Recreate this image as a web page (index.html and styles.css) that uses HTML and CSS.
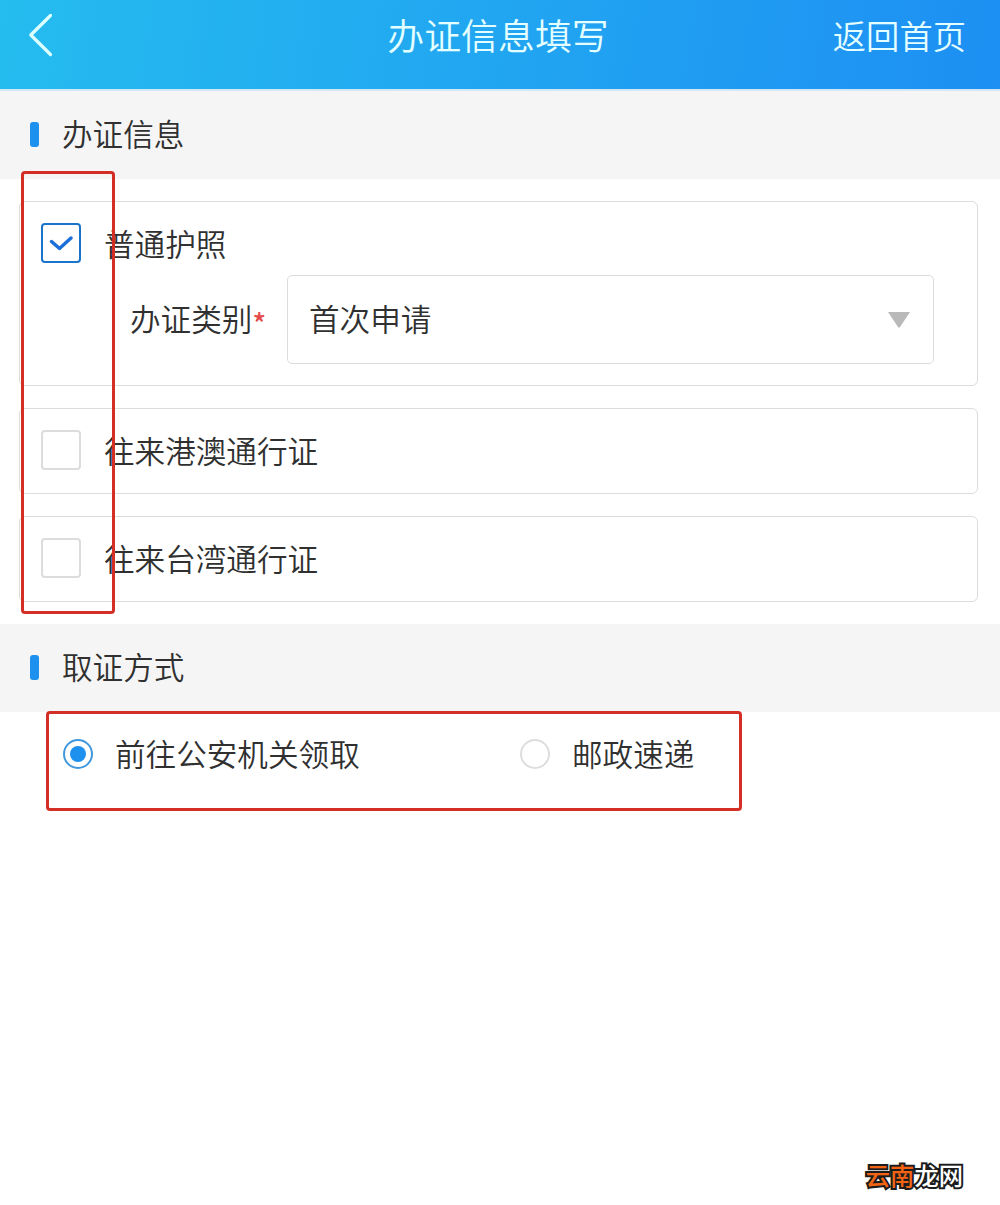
FILE: index.html
```html
<!DOCTYPE html>
<html lang="zh-CN">
<head>
    <meta charset="UTF-8">
    <meta name="viewport" content="width=device-width, initial-scale=1.0">
    <title>办证信息填写</title>
    <link rel="stylesheet" href="styles.css">
</head>
<body>
    <header class="header">
        <a class="back">
            <svg width="26" height="44" viewBox="0 0 26 44">
                <path d="M22.5 2.5 L2.8 22 L22.5 41.5" fill="none" stroke="#dcffff" stroke-width="3.2" stroke-linecap="round" stroke-linejoin="round"/>
            </svg>
        </a>
        <h1>办证信息填写</h1>
        <a class="home">返回首页</a>
    </header>

    <!-- 办证信息 -->
    <h2 class="section-title"><span>办证信息</span></h2>
    <div class="cards">
        <div class="card">
            <label class="check-row">
                <span class="checkbox checked">
                    <svg width="24" height="18" viewBox="0 0 24 18">
                        <path d="M2.5 7.5 L10.5 14.5 L22 4" fill="none" stroke="#1b6fd8" stroke-width="3.4" stroke-linecap="round" stroke-linejoin="round"/>
                    </svg>
                </span>
                <span>普通护照</span>
            </label>
            <div class="type-row">
                <span class="type-label">办证类别<i class="required">*</i></span>
                <div class="select">
                    <span>首次申请</span>
                    <svg width="22" height="16" viewBox="0 0 22 16"><path d="M0 0 H22 L12 15 Q11 16 10 15 Z" fill="#b9b9b9"/></svg>
                </div>
            </div>
        </div>
        <div class="card">
            <label class="check-row">
                <span class="checkbox"></span>
                <span>往来港澳通行证</span>
            </label>
        </div>
        <div class="card">
            <label class="check-row">
                <span class="checkbox"></span>
                <span>往来台湾通行证</span>
            </label>
        </div>
        <div class="mark mark-checks"></div>
    </div>

    <!-- 取证方式 -->
    <h2 class="section-title"><span>取证方式</span></h2>
    <div class="radios">
        <label class="radio-item">
            <span class="radio selected"></span>
            <span class="radio-text">前往公安机关领取</span>
        </label>
        <label class="radio-item">
            <span class="radio"></span>
            <span class="radio-text">邮政速递</span>
        </label>
        <div class="mark mark-radios"></div>
    </div>

    <div class="watermark"><span>云南</span>龙网</div>
</body>
</html>
```

FILE: styles.css
```css
* {
    box-sizing: border-box;
}

body {
    margin: 0;
    height: 1205px;
    position: relative;
    background-color: #ffffff;
    color: #303030;
    font-family: "Noto Sans CJK SC", sans-serif;
    font-size: 30.6px;
    font-weight: 350;
    line-height: 42px;
    overflow: hidden;
}

.header {
    display: grid;
    grid-template-columns: 1fr auto 1fr;
    height: 91px;
    padding: 0 34px 0 28px;
    border-bottom: 2px solid #d3e8f6;
    background: linear-gradient(100deg, #25bcef, #1d8ff3);
    background-clip: padding-box;
    color: #e4ffff;
}

.back {
    padding-top: 13px;
    line-height: 0;
}

h1 {
    margin: 0;
    padding: 7px 0 0 2px;
    font-size: 36.9px;
    font-weight: 350;
    line-height: 54px;
}

.home {
    padding-top: 11px;
    font-size: 33.3px;
    line-height: 48px;
    text-align: right;
}

.section-title {
    display: flex;
    align-items: center;
    height: 88px;
    margin: 0;
    padding: 0 0 1px 30px;
    background-color: #f5f5f5;
    font-size: 30.6px;
    font-weight: 350;
}

.section-title::before {
    content: "";
    width: 9px;
    height: 25px;
    margin-right: 23px;
    border-radius: 3px;
    background-color: #1e90ee;
}

.section-title span {
    margin-top: -4px;
}

.cards {
    position: relative;
    display: flex;
    flex-direction: column;
    gap: 22px;
    padding: 22px 22px 22px 19px;
}

.card {
    min-height: 86px;
    padding: 20px 43px 21px 21px;
    border: 1px solid #dcdcdc;
    border-radius: 6px;
}

.check-row {
    display: flex;
    align-items: center;
    gap: 23px;
}

.checkbox {
    display: flex;
    align-items: center;
    justify-content: center;
    width: 40px;
    height: 40px;
    border: 2px solid #dcdcdc;
    border-radius: 4px;
}

.checkbox.checked {
    border-color: #1b74cc;
}

.type-row {
    display: flex;
    align-items: center;
    justify-content: space-between;
    margin-top: 11px;
    padding-left: 89px;
}

.type-label {
    display: flex;
    margin-top: -4px;
}

.required {
    margin: 4px 0 -4px;
    color: #e64b4b;
    font-size: 28px;
    font-style: normal;
    font-weight: 500;
}

.select {
    display: flex;
    align-items: center;
    justify-content: space-between;
    width: 647px;
    height: 89px;
    padding: 0 23px 0 21px;
    border: 1px solid #dcdcdc;
    border-radius: 5px;
}

.select span {
    margin-top: -3px;
}

.radios {
    position: relative;
    display: flex;
    padding: 22px 0 22px 63px;
}

.radio-item {
    display: flex;
    align-items: center;
    gap: 22px;
    width: 457px;
}

.radio {
    display: flex;
    align-items: center;
    justify-content: center;
    width: 30px;
    height: 30px;
    border: 2px solid #dddddd;
    border-radius: 50%;
}

.radio.selected {
    border-color: #4298dc;
}

.radio.selected::before {
    content: "";
    width: 16px;
    height: 16px;
    border-radius: 50%;
    background-color: #1e90ee;
}

.radio-text {
    margin: -2px 0 0;
}

/* 表单上的红色标注框 */
.mark {
    position: absolute;
    border: 3px solid #d42f25;
    border-radius: 4px;
}

.mark-checks {
    left: 21px;
    top: -8px;
    width: 94px;
    height: 443px;
}

.mark-radios {
    left: 46px;
    top: -1px;
    width: 696px;
    height: 100px;
}

.watermark {
    position: absolute;
    right: 37px;
    bottom: 12px;
    color: #ffffff;
    font-size: 24.3px;
    font-weight: 500;
    line-height: 36px;
    -webkit-text-stroke: 4px #1c1c1c;
    paint-order: stroke fill;
}

.watermark span {
    color: #f26414;
}
```
